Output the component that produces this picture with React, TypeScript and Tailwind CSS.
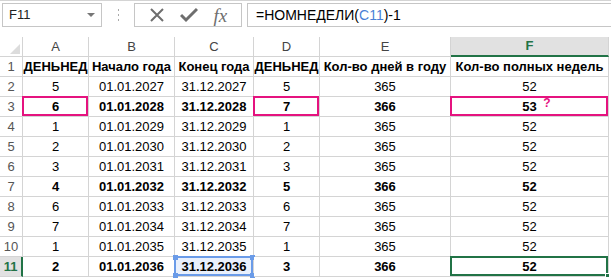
import React from "react";

const cols = ["A", "B", "C", "D", "E", "F"];

const rows: string[][] = [
  ["ДЕНЬНЕД", "Начало года", "Конец года", "ДЕНЬНЕД", "Кол-во дней в году", "Кол-во полных недель"],
  ["5", "01.01.2027", "31.12.2027", "5", "365", "52"],
  ["6", "01.01.2028", "31.12.2028", "7", "366", "53"],
  ["1", "01.01.2029", "31.12.2029", "1", "365", "52"],
  ["2", "01.01.2030", "31.12.2030", "2", "365", "52"],
  ["3", "01.01.2031", "31.12.2031", "3", "365", "52"],
  ["4", "01.01.2032", "31.12.2032", "5", "366", "52"],
  ["6", "01.01.2033", "31.12.2033", "6", "365", "52"],
  ["7", "01.01.2034", "31.12.2034", "7", "365", "52"],
  ["1", "01.01.2035", "31.12.2035", "1", "365", "52"],
  ["2", "01.01.2036", "31.12.2036", "3", "366", "52"],
];

const boldRows = [0, 2, 6, 10];

const Handle = ({ className }: { className: string }) => (
  <span className={`absolute w-[5px] h-[5px] bg-[#6a9be8] ${className}`} />
);

const Cell: React.FC<{ r: number; c: number; text: string }> = ({ r, c, text }) => {
  const bold = boldRows.includes(r);
  const pink = r === 2 && (c === 0 || c === 3 || c === 5);
  const ref = r === 10 && c === 2;
  const active = r === 10 && c === 5;
  return (
    <div
      className={`relative h-5 flex items-center justify-center border-r border-b border-[#d4d4d4] text-[13px] text-black ${
        bold ? "font-bold" : ""
      } ${ref ? "bg-[#e9f0fc]" : "bg-white"}`}
    >
      <span className="relative">
        {text}
        {r === 2 && c === 5 && (
          <span className="absolute left-[21px] -top-[3px] text-[#e5107f] font-bold text-[12px]">?</span>
        )}
      </span>
      {pink && <span className="absolute -left-px -top-px -right-0 -bottom-0 border-2 border-[#e5137f]" />}
      {ref && (
        <>
          <span className="absolute -left-px -top-px right-0 bottom-0 border-2 border-[#6a9be8]" />
          <Handle className="-left-[2px] -top-[2px]" />
          <Handle className="-right-[2px] -top-[2px]" />
          <Handle className="-left-[2px] -bottom-[2px]" />
          <Handle className="-right-[2px] -bottom-[2px]" />
        </>
      )}
      {active && (
        <>
          <span className="absolute -left-px -top-px right-0 bottom-0 border-2 border-[#217346]" />
          <span className="absolute -right-[2px] -bottom-[2px] w-[5px] h-[5px] bg-[#217346] border border-white" />
        </>
      )}
    </div>
  );
};

export default function App() {
  return (
    <div
      className="w-[611px] h-[280px] bg-white overflow-hidden"
      style={{ fontFamily: '"Liberation Sans", Arial, sans-serif' }}
    >
      {/* formula bar */}
      <div className="h-[37px] border-t border-[#d4d4d4] flex items-start pt-[2px] pl-[2px]">
        <div className="w-[100px] h-[24px] border border-[#c6c6c6] flex items-center justify-between pl-[6px] pr-[6px] text-[13px] text-[#222]">
          <span>F11</span>
          <svg width="8" height="5" viewBox="0 0 8 5">
            <path d="M0 0 L8 0 L4 4 Z" fill="#777" />
          </svg>
        </div>
        <div className="w-[32px] h-[24px] flex items-center justify-center">
          <svg width="3" height="12" viewBox="0 0 3 12">
            <rect x="1" y="0" width="1" height="2" fill="#aaa" />
            <rect x="1" y="5" width="1" height="2" fill="#aaa" />
            <rect x="1" y="10" width="1" height="2" fill="#aaa" />
          </svg>
        </div>
        <div className="w-[108px] h-[24px] border border-[#c6c6c6] flex items-center justify-around px-[6px]">
          <svg width="16" height="16" viewBox="0 0 16 16">
            <path d="M2 2 L14 14 M14 2 L2 14" stroke="#6e6e6e" strokeWidth="2" />
          </svg>
          <svg width="18" height="16" viewBox="0 0 18 16">
            <path d="M1 8 L6 13 L17 2" stroke="#6e6e6e" strokeWidth="3" fill="none" />
          </svg>
          <span
            className="text-[19px] italic text-[#6e6e6e] leading-none"
            style={{ fontFamily: '"Liberation Serif", "Times New Roman", serif' }}
          >
            <i>f</i>x
          </span>
        </div>
        <div className="ml-[5px] flex-1 h-[24px] border border-[#c6c6c6] border-r-0 flex items-center pl-[8px] text-[14px] text-black">
          =НОМНЕДЕЛИ(<span className="text-[#4a7fd6]">C11</span>)-1
        </div>
      </div>

      {/* grid */}
      <div className="grid grid-cols-[23px_66px_86px_79px_66px_131px_158px]">
        {/* header row */}
        <div className="relative h-5 border-r border-b border-[#d4d4d4] bg-white">
          <svg className="absolute right-[2px] bottom-[2px]" width="10" height="10" viewBox="0 0 10 10">
            <path d="M10 0 L10 10 L0 10 Z" fill="#dcdcdc" />
          </svg>
        </div>
        {cols.map((c) => (
          <div
            key={c}
            className={`h-5 flex items-center justify-center text-[13px] border-r ${
              c === "F"
                ? "bg-[#e1e1e1] text-[#217346] font-bold border-b-2 border-b-[#217346] border-r-[#d4d4d4]"
                : "bg-white text-[#444] border-b border-[#d4d4d4]"
            }`}
          >
            {c}
          </div>
        ))}

        {rows.map((row, r) => (
          <React.Fragment key={r}>
            <div
              className={`h-5 flex items-center justify-center text-[13px] border-b border-[#d4d4d4] ${
                r === 10
                  ? "bg-[#e1e1e1] text-[#217346] font-bold border-r-2 border-r-[#217346]"
                  : "bg-white text-[#555] border-r"
              }`}
            >
              {r + 1}
            </div>
            {row.map((t, c) => (
              <Cell key={c} r={r} c={c} text={t} />
            ))}
          </React.Fragment>
        ))}
      </div>
    </div>
  );
}
